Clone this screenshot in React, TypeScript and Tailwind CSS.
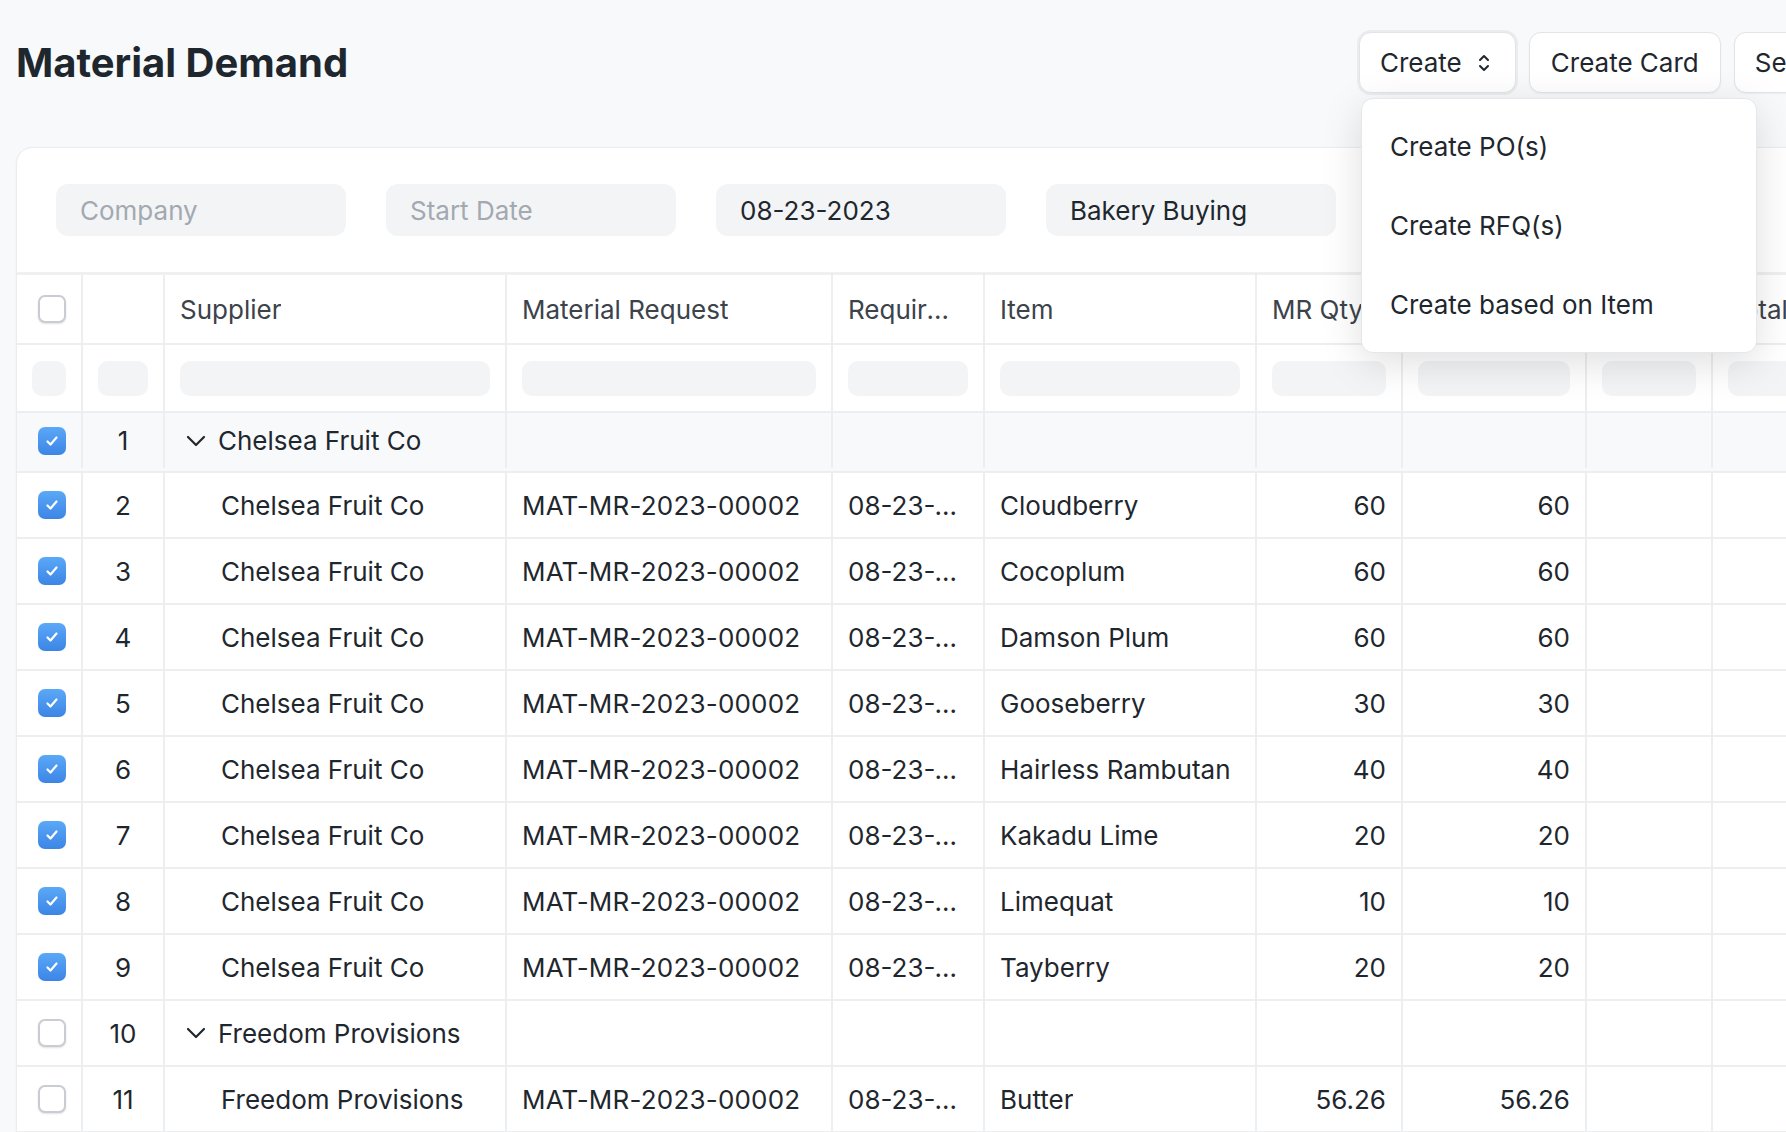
const ROW = "grid grid-cols-[66px_82px_342px_326px_152px_272px_146px_184px_126px_240px]";
const CELL = "border-r-2 border-[#eceef0] flex items-center min-w-0";

type Line = {
  group?: boolean;
  checked: boolean;
  supplier: string;
  item?: string;
  qty?: string;
  shaded?: boolean;
};

const rows: Line[] = [
  { group: true, checked: true, supplier: "Chelsea Fruit Co", shaded: true },
  { checked: true, supplier: "Chelsea Fruit Co", item: "Cloudberry", qty: "60" },
  { checked: true, supplier: "Chelsea Fruit Co", item: "Cocoplum", qty: "60" },
  { checked: true, supplier: "Chelsea Fruit Co", item: "Damson Plum", qty: "60" },
  { checked: true, supplier: "Chelsea Fruit Co", item: "Gooseberry", qty: "30" },
  { checked: true, supplier: "Chelsea Fruit Co", item: "Hairless Rambutan", qty: "40" },
  { checked: true, supplier: "Chelsea Fruit Co", item: "Kakadu Lime", qty: "20" },
  { checked: true, supplier: "Chelsea Fruit Co", item: "Limequat", qty: "10" },
  { checked: true, supplier: "Chelsea Fruit Co", item: "Tayberry", qty: "20" },
  { group: true, checked: false, supplier: "Freedom Provisions" },
  { checked: false, supplier: "Freedom Provisions", item: "Butter", qty: "56.26" },
];

function Checkbox({ on }: { on: boolean }) {
  if (on) {
    return (
      <div className="w-7 h-7 rounded-[7px] bg-linear-to-b from-[#5ba8f7] to-[#3c85e6] flex items-center justify-center">
        <svg width="16" height="16" viewBox="0 0 16 16" fill="none">
          <path d="M3.5 8.5l3 3 6-7" stroke="white" strokeWidth="2.2" strokeLinecap="round" strokeLinejoin="round" />
        </svg>
      </div>
    );
  }
  return <div className="w-7 h-7 rounded-[7px] border-2 border-[#c9ccd1] bg-white shadow-[0_1px_2px_rgba(0,0,0,0.12)]" />;
}

function FilterBox({ text, placeholder }: { text: string; placeholder?: boolean }) {
  return (
    <div
      className={`w-[290px] h-[52px] shrink-0 rounded-[12px] bg-[#f3f4f6] px-[24px] flex items-center text-[26px] ${
        placeholder ? "text-[#a2a9b1]" : "text-[#1f272e]"
      }`}
    >
      {text}
    </div>
  );
}

export default function App() {
  const headers = ["Supplier", "Material Request", "Required By", "Item", "MR Qty", "Qty", "Rate", "Total"];

  return (
    <div className="w-[1786px] h-[1132px] overflow-hidden bg-[#f8f9fa] font-[Inter,sans-serif] text-[#1f272e]">
      {/* Page header */}
      <div className="flex items-center pl-4 pt-8">
        <h1 className="w-[1343px] shrink-0 text-[40px] font-bold leading-none text-[#1f272e]">Material Demand</h1>
        <div className="flex gap-[13px] shrink-0">
          <div className="relative">
            <button className="h-[61px] pl-[20px] pr-[24px] rounded-[12px] border border-[#e2e4e8] bg-white ring-2 ring-[#eaecef] shadow-[0_1px_2px_rgba(0,0,0,0.05)] flex items-center gap-[15px] text-[26px] text-[#1f272e]">
              Create
              <svg width="14" height="22" viewBox="0 0 14 22" fill="none">
                <path d="M3 8l4-4 4 4M3 14l4 4 4-4" stroke="#1f272e" strokeWidth="2" strokeLinecap="round" strokeLinejoin="round" />
              </svg>
            </button>
            <div className="absolute left-[2px] top-[calc(100%+5px)] z-20 w-[396px] rounded-[12px] border border-[#e5e7eb] bg-white py-[8px] shadow-[0_10px_40px_rgba(0,0,0,0.13)]">
              {["Create PO(s)", "Create RFQ(s)", "Create based on Item"].map((label) => (
                <div key={label} className="h-[79px] px-[28px] flex items-center text-[26px] text-[#1f272e]">
                  {label}
                </div>
              ))}
            </div>
          </div>
          <button className="h-[61px] px-[21px] rounded-[12px] border border-[#e2e4e8] bg-white shadow-[0_1px_2px_rgba(0,0,0,0.05)] text-[26px] text-[#1f272e]">
            Create Card
          </button>
          <button className="h-[61px] px-[20px] rounded-[12px] border border-[#e2e4e8] bg-white shadow-[0_1px_2px_rgba(0,0,0,0.05)] text-[26px] text-[#1f272e]">
            Settings
          </button>
        </div>
      </div>

      {/* Card */}
      <div className="ml-4 mt-[54px] w-[1820px] rounded-tl-[16px] border border-[#eaecee] bg-white shadow-[0_1px_3px_rgba(0,0,0,0.04)]">
        <div className="flex gap-10 px-[39px] pt-[36px] pb-[36px]">
          <FilterBox text="Company" placeholder />
          <FilterBox text="Start Date" placeholder />
          <FilterBox text="08-23-2023" />
          <FilterBox text="Bakery Buying" />
          <FilterBox text="Supplier" placeholder />
        </div>

        <div className="border-t-[3px] border-[#eef0f2]">
          {/* Column header */}
          <div className={`${ROW} h-[70px] border-b-2 border-[#eceef0] text-[26px] text-[#3c434b]`}>
            <div className={`${CELL} justify-center pl-[5px]`}>
              <Checkbox on={false} />
            </div>
            <div className={CELL} />
            {headers.map((h) => (
              <div key={h} className={`${CELL} pl-[15px] pr-[34px]`}>
                <span className="truncate">{h}</span>
              </div>
            ))}
          </div>

          {/* Filter row */}
          <div className={`${ROW} h-[68px] border-b-2 border-[#eceef0]`}>
            {Array.from({ length: 10 }).map((_, i) => (
              <div key={i} className={`${CELL} px-[15px]`}>
                <div className="h-[35px] w-full rounded-[10px] bg-[#f3f4f6]" />
              </div>
            ))}
          </div>

          {/* Rows */}
          {rows.map((r, i) => (
            <div
              key={i}
              className={`${ROW} ${i === 0 ? "h-[60px] pb-[3px]" : "h-[66px]"} border-b-2 border-[#eceef0] text-[26px] ${
                r.shaded ? "bg-[#f8f9fa]" : "bg-white"
              }`}
            >
              <div className={`${CELL} justify-center pl-[5px]`}>
                <Checkbox on={r.checked} />
              </div>
              <div className={`${CELL} justify-center`}>{i + 1}</div>
              {r.group ? (
                <div className={`${CELL} pl-[21px] gap-[12px]`}>
                  <svg width="20" height="12" viewBox="0 0 20 12" fill="none" className="shrink-0">
                    <path d="M2 2l8 8 8-8" stroke="#1f272e" strokeWidth="2.2" strokeLinecap="round" strokeLinejoin="round" />
                  </svg>
                  <span className="truncate">{r.supplier}</span>
                </div>
              ) : (
                <div className={`${CELL} pl-[56px] pr-[15px]`}>
                  <span className="truncate">{r.supplier}</span>
                </div>
              )}
              <div className={`${CELL} px-[15px] tracking-[0.2px]`}>{r.group ? "" : "MAT-MR-2023-00002"}</div>
              <div className={`${CELL} px-[15px]`}>
                <span className="truncate">{r.group ? "" : "08-23-2023"}</span>
              </div>
              <div className={`${CELL} px-[15px]`}>
                <span className="truncate">{r.item ?? ""}</span>
              </div>
              <div className={`${CELL} px-[15px] justify-end`}>{r.qty ?? ""}</div>
              <div className={`${CELL} px-[15px] justify-end`}>{r.qty ?? ""}</div>
              <div className={CELL} />
              <div className={CELL} />
            </div>
          ))}
        </div>
      </div>
    </div>
  );
}
